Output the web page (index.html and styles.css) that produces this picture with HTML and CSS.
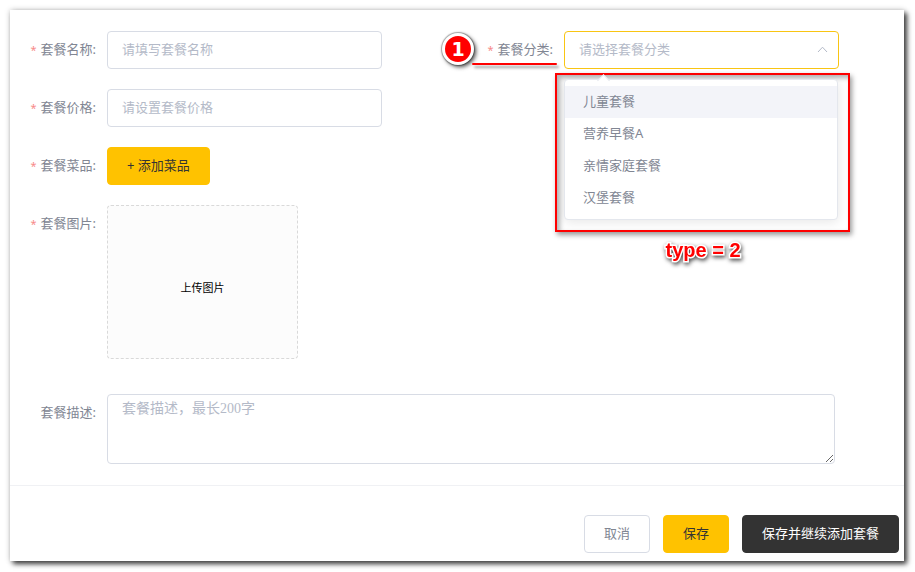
FILE: index.html
```html
<!DOCTYPE html>
<html lang="zh-CN">
<head>
<meta charset="utf-8">
<title>添加套餐</title>
<link rel="stylesheet" href="styles.css">
</head>
<body>
<form class="card">
  <div class="fields">
    <label class="label required" for="name">套餐名称:</label>
    <input class="control" id="name" type="text" placeholder="请填写套餐名称">

    <label class="label required category" for="category">套餐分类:
      <span class="marker">1</span>
    </label>
    <div class="select">
      <select class="control" id="category">
        <option>请选择套餐分类</option>
      </select>
      <svg class="chevron" viewBox="0 0 11 7" aria-hidden="true"><path d="M1 6 5.500 1.200 10 6"/></svg>
      <div class="callout">
        <ul class="menu" role="listbox">
          <li class="option active" role="option">儿童套餐</li>
          <li class="option" role="option">营养早餐A</li>
          <li class="option" role="option">亲情家庭套餐</li>
          <li class="option" role="option">汉堡套餐</li>
        </ul>
        <p class="note">type = 2</p>
      </div>
    </div>

    <label class="label required first" for="price">套餐价格:</label>
    <input class="control" id="price" type="text" placeholder="请设置套餐价格">

    <label class="label required first" for="add">套餐菜品:</label>
    <div><button class="button primary" id="add" type="button">+ 添加菜品</button></div>

    <label class="label required first" for="photo">套餐图片:</label>
    <div class="upload">
      <input class="file" id="photo" type="file">
      <label class="upload-text" for="photo">上传图片</label>
    </div>

    <label class="label first" for="description">套餐描述:</label>
    <textarea class="control description" id="description" placeholder="套餐描述，最长200字"></textarea>
  </div>
  <div class="actions">
    <button class="button" type="button">取消</button>
    <button class="button primary" type="submit">保存</button>
    <button class="button dark" type="button">保存并继续添加套餐</button>
  </div>
</form>
</body>
</html>
```
FILE: styles.css
```css
* {
  box-sizing: border-box;
}

body {
  margin: 0;
  padding: 10px 11px 10px 10px;
  background: #fff;
  color: #818693;
  font: 13px/20px "Noto Sans", "Noto Sans CJK SC", sans-serif;
}

.card {
  background: #fff;
  box-shadow: 3px 3px 5px rgba(0, 0, 0, 0.75), 0 0 6px rgba(0, 0, 0, 0.2);
}

.fields {
  display: grid;
  grid-template-columns: 97px minmax(0, 1fr) 182px minmax(0, 1fr);
  align-items: start;
  row-gap: 20px;
  padding: 21px 65px 21px 0;
}

.label {
  padding-right: 11px;
  line-height: 36px;
  text-align: right;
  white-space: nowrap;
}

.first {
  grid-column: 1;
}

.required::before {
  content: "*";
  margin-right: 4px;
  color: #f78989;
  font-size: 11px;
}

.control {
  display: block;
  width: 100%;
  height: 38px;
  margin: 0;
  padding: 0 14px 3px;
  border: 1px solid #d8dce5;
  border-radius: 4px;
  outline: 0;
  background: #fff;
  color: #b4bac8;
  font: inherit;
}

.control::placeholder {
  color: #b4bac8;
  opacity: 1;
}

.select {
  position: relative;
}

.select .control {
  appearance: none;
  border-color: #f9c513;
}

.chevron {
  position: absolute;
  top: 15px;
  right: 11px;
  width: 11px;
  height: 7px;
  fill: none;
  stroke: #b4bac8;
}

.category {
  position: relative;
}

.category::after {
  content: "";
  position: absolute;
  top: 32px;
  right: 7px;
  width: 85px;
  height: 2px;
  border-radius: 1px;
  background: #f00;
  box-shadow: 2px 3px 3px rgba(0, 0, 0, 0.4);
}

.marker {
  position: absolute;
  top: 2px;
  left: 60px;
  width: 32px;
  height: 32px;
  border: 3px solid #fff;
  border-radius: 50%;
  background: #f00;
  box-shadow: 0 0 1px 1px rgba(0, 0, 0, 0.3), 2px 2px 4px rgba(0, 0, 0, 0.7);
  color: #fff;
  font: bold 19px/26px "DejaVu Sans", sans-serif;
  text-align: center;
}

.callout {
  position: absolute;
  top: 42px;
  right: -11px;
  left: -9px;
  height: 159px;
  padding: 4px 10px 0 7px;
  border: 2px solid #f00;
  box-shadow: 2px 3px 5px rgba(0, 0, 0, 0.4), inset 3px 3px 5px rgba(0, 0, 0, 0.3);
}

.menu {
  position: relative;
  margin: 0;
  padding: 6px 0 5px;
  border: 1px solid #e4e7ed;
  border-radius: 4px;
  background: #fff;
  box-shadow: 0 2px 12px rgba(0, 0, 0, 0.1);
  list-style: none;
}

.menu::before {
  content: "";
  position: absolute;
  top: -4px;
  left: 34px;
  width: 8px;
  height: 8px;
  border: 1px solid #e4e7ed;
  border-width: 1px 0 0 1px;
  background: #fff;
  transform: rotate(45deg);
}

.option {
  position: relative;
  padding: 0 18px 2px;
  line-height: 30px;
}

.active {
  background: #f3f4f9;
}

.note {
  margin: 18px 0 0;
  padding-left: 4px;
  color: #f00;
  font: bold 20px/24px "Liberation Sans", sans-serif;
  text-align: center;
  -webkit-text-stroke: 3px #fff;
  paint-order: stroke fill;
  filter: drop-shadow(1px 2px 2px rgba(0, 0, 0, 0.7));
}

.button {
  height: 38px;
  padding: 0 19px 3px;
  border: 1px solid #d8dce5;
  border-radius: 4px;
  background: #fff;
  color: #818693;
  font: inherit;
}

.primary {
  border-color: #ffc200;
  background: #ffc200;
  color: #333;
}

.dark {
  border-color: #333;
  background: #333;
  color: #fff;
}

.upload {
  position: relative;
  width: 191px;
  height: 154px;
  border: 1px dashed #d9d9d9;
  border-radius: 4px;
  background: #fcfcfc;
}

.file {
  position: absolute;
  width: 1px;
  height: 1px;
  opacity: 0;
}

.upload-text {
  display: block;
  padding-top: 72px;
  color: #000;
  font-size: 11px;
  text-align: center;
}

.description {
  grid-column: 2 / -1;
  width: calc(100% - 4px);
  height: 70px;
  margin-top: 15px;
  padding: 5px 14px;
  font: 14px/18px "Liberation Serif", "Noto Sans CJK SC", serif;
  resize: vertical;
}

.label[for="description"] {
  margin-top: 15px;
}

.actions {
  display: flex;
  justify-content: flex-end;
  gap: 13px;
  padding: 29px 5px 8px;
  border-top: 1px solid #f0f1f4;
}
```
